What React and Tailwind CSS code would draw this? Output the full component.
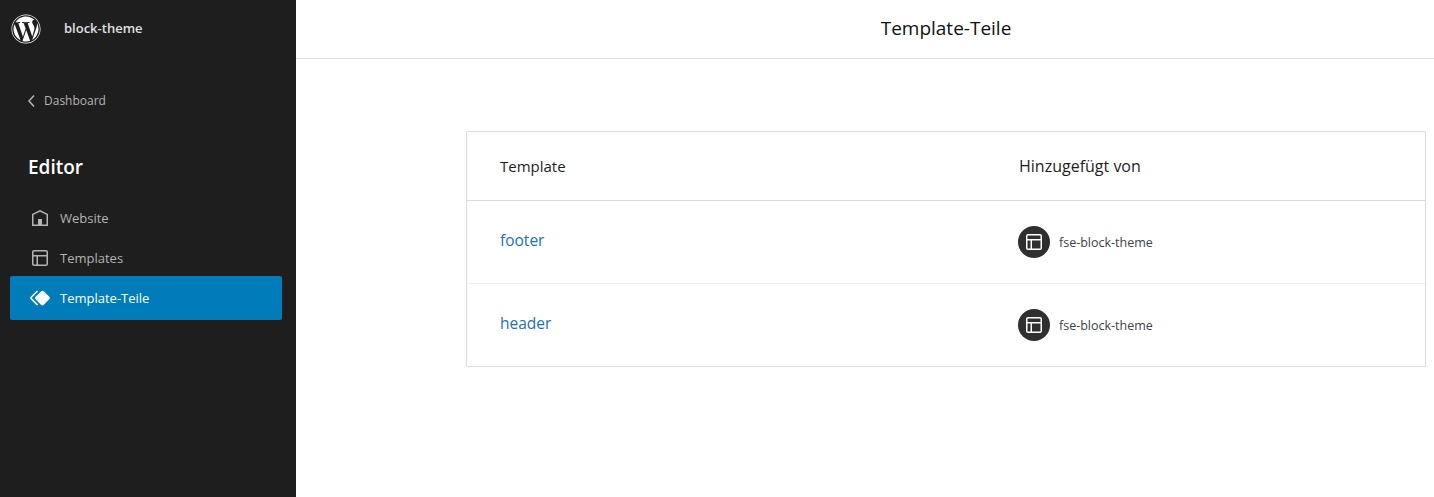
import { FaWordpress } from 'react-icons/fa';

const FONT = "font-['Open_Sans','Noto_Sans',sans-serif]";

const homePath = 'M12 4L4 7.9V20h16V7.9L12 4zm6.5 14.5H14V13h-4v5.5H5.5V8.8L12 5.7l6.5 3.1v9.7z';
const layoutPath =
  'M18 5.5H6a.5.5 0 00-.5.5v3h13V6a.5.5 0 00-.5-.5zm.5 5H10v8h8a.5.5 0 00.5-.5v-7.5zm-10 0h-3V18a.5.5 0 00.5.5h2.5v-8zM6 4h12a2 2 0 012 2v12a2 2 0 01-2 2H6a2 2 0 01-2-2V6a2 2 0 012-2z';
const symbolPath =
  'M21.3 10.8l-5.6-5.6c-.7-.7-1.8-.7-2.5 0l-5.6 5.6c-.7.7-.7 1.8 0 2.5l5.6 5.6c.3.3.8.5 1.2.5s.9-.2 1.2-.5l5.6-5.6c.8-.7.8-1.9.1-2.5zm-17.6 1L10 5.5l-1-1-6.3 6.3c-.7.7-.7 1.8 0 2.5L9 19.5l1.1-1.1-6.3-6.3c-.2 0-.2-.2-.1-.3z';
const chevronPath = 'M14.6 7l-1.2-1L8 12l5.4 6 1.2-1-4.6-5z';

function Icon({ d }) {
  return (
    <svg viewBox="0 0 24 24" width="24" height="24" fill="currentColor">
      <path d={d} />
    </svg>
  );
}

function NavItem({ icon, label, active }) {
  return (
    <div
      className={`flex items-center gap-2 rounded-[2px] pl-[18px] text-[13px] ${
        active ? 'h-11 -my-0.5 bg-[#007cba] text-white' : 'h-10 text-[#b4b4b4]'
      }`}
    >
      <Icon d={icon} />
      <span className="mt-0.5">{label}</span>
    </div>
  );
}

function Row({ name }) {
  return (
    <div className="flex h-[83px] items-center border-t border-[#f0f0f0] first:h-[82px] first:border-t-0">
      <div className="w-[551px] pb-0.5 pl-[33px] text-[15.5px] font-medium text-[#2271b1]">{name}</div>
      <div className="flex items-center gap-[9px]">
        <div className="flex h-8 w-8 items-center justify-center rounded-full bg-[#2f2f2f] text-white">
          <Icon d={layoutPath} />
        </div>
        <span className="mt-0.5 text-[12.5px] text-[#3c434a]">fse-block-theme</span>
      </div>
    </div>
  );
}

export default function App() {
  return (
    <div className={`flex h-[497px] overflow-hidden bg-white ${FONT}`}>
      <aside className="w-[296px] shrink-0 bg-[#1e1e1e]">
        <div className="flex h-[58px] items-center gap-[23px] pl-[11px]">
          <FaWordpress className="text-white" size={30} />
          <span className="text-[13px] font-semibold text-[#e0e0e0]">block-theme</span>
        </div>
        <div className="mt-[31px] flex items-center pl-5 text-[12px] text-[#b4b4b4]">
          <Icon d={chevronPath} />
          <span>Dashboard</span>
        </div>
        <h1 className="mt-[40px] pl-7 text-[19px] leading-7 font-semibold text-white">Editor</h1>
        <nav className="mt-[17px] ml-[10px] w-[272px]">
          <NavItem icon={homePath} label="Website" />
          <NavItem icon={layoutPath} label="Templates" />
          <NavItem icon={symbolPath} label="Template-Teile" active />
        </nav>
      </aside>
      <main className="flex-1">
        <header className="flex h-[59px] items-center justify-center border-b border-[#e0e0e0] pr-2 pb-0.5 pl-[170px]">
          <h2 className="text-[19px] font-medium text-[#111111]">Template-Teile</h2>
        </header>
        <div className="pt-[72px] pr-2 pl-[170px]">
          <div className="rounded-[1px] border border-[#dcdcde]">
            <div className="flex h-[69px] items-center border-b border-[#dcdcde] font-medium text-[#1e1e1e]">
              <div className="w-[551px] pl-[33px] text-[15px]">Template</div>
              <div className="pl-px text-[16px]">Hinzugefügt von</div>
            </div>
            <div>
              <Row name="footer" />
              <Row name="header" />
            </div>
          </div>
        </div>
      </main>
    </div>
  );
}
